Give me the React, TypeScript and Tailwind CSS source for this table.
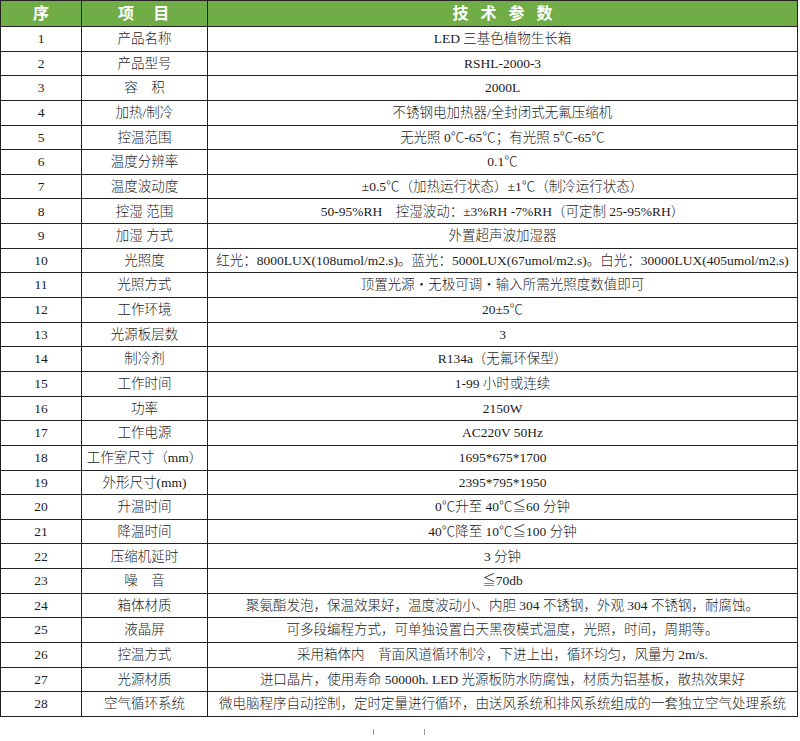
const rows: [string, string][] = [
  ["产品名称", "LED 三基色植物生长箱"],
  ["产品型号", "RSHL-2000-3"],
  ["容　积", "2000L"],
  ["加热/制冷", "不锈钢电加热器/全封闭式无氟压缩机"],
  ["控温范围", "无光照 0℃-65℃；有光照 5℃-65℃"],
  ["温度分辨率", "0.1℃"],
  ["温度波动度", "±0.5℃（加热运行状态）±1℃（制冷运行状态）"],
  ["控湿 范围", "50-95%RH　控湿波动：±3%RH -7%RH（可定制 25-95%RH）"],
  ["加湿 方式", "外置超声波加湿器"],
  ["光照度", "红光：8000LUX(108umol/m2.s)。蓝光：5000LUX(67umol/m2.s)。白光：30000LUX(405umol/m2.s)"],
  ["光照方式", "顶置光源・无极可调・输入所需光照度数值即可"],
  ["工作环境", "20±5℃"],
  ["光源板层数", "3"],
  ["制冷剂", "R134a（无氟环保型）"],
  ["工作时间", "1-99 小时或连续"],
  ["功率", "2150W"],
  ["工作电源", "AC220V 50Hz"],
  ["工作室尺寸（mm）", "1695*675*1700"],
  ["外形尺寸(mm)", "2395*795*1950"],
  ["升温时间", "0℃升至 40℃≦60 分钟"],
  ["降温时间", "40℃降至 10℃≦100 分钟"],
  ["压缩机延时", "3 分钟"],
  ["噪　音", "≦70db"],
  ["箱体材质", "聚氨酯发泡，保温效果好，温度波动小、内胆 304 不锈钢，外观 304 不锈钢，耐腐蚀。"],
  ["液晶屏", "可多段编程方式，可单独设置白天黑夜模式温度，光照，时间，周期等。"],
  ["控温方式", "采用箱体内　背面风道循环制冷，下进上出，循环均匀，风量为 2m/s."],
  ["光源材质", "进口晶片，使用寿命 50000h. LED 光源板防水防腐蚀，材质为铝基板，散热效果好"],
  ["空气循环系统", "微电脑程序自动控制，定时定量进行循环，由送风系统和排风系统组成的一套独立空气处理系统"],
];

export default function App() {
  return (
    <div className="w-[800px] h-[741px] bg-white overflow-hidden">
      <table
        className="w-[798px] border-collapse table-fixed text-[13.5px] text-[#1c1c1c] font-light"
        style={{ fontFamily: '"Liberation Serif", "Noto Sans CJK SC", serif' }}
      >
        <colgroup>
          <col className="w-[81px]" />
          <col className="w-[126px]" />
          <col />
        </colgroup>
        <thead>
          <tr className="h-[26px] bg-[#70ad47] text-white text-[16px]">
            <th className="border border-[#222] font-bold">序</th>
            <th className="border border-[#222] font-bold tracking-[0.1em]">项　目</th>
            <th className="border border-[#222] font-bold tracking-[0.75em] pl-[12px]">技术参数</th>
          </tr>
        </thead>
        <tbody>
          {rows.map(([item, value], i) => (
            <tr key={item} className="h-[24.65px]">
              <td className="border border-[#222] text-center leading-none">{i + 1}</td>
              <td className="border border-[#222] text-center leading-none whitespace-nowrap">{item}</td>
              <td className="border border-[#222] text-center leading-none whitespace-nowrap overflow-hidden">{value}</td>
            </tr>
          ))}
        </tbody>
      </table>
      <div className="flex gap-[50px] pl-[373px] pt-[12px]">
        <span className="block w-px h-[6px] bg-[#999]" />
        <span className="block w-px h-[6px] bg-[#999]" />
      </div>
    </div>
  );
}
